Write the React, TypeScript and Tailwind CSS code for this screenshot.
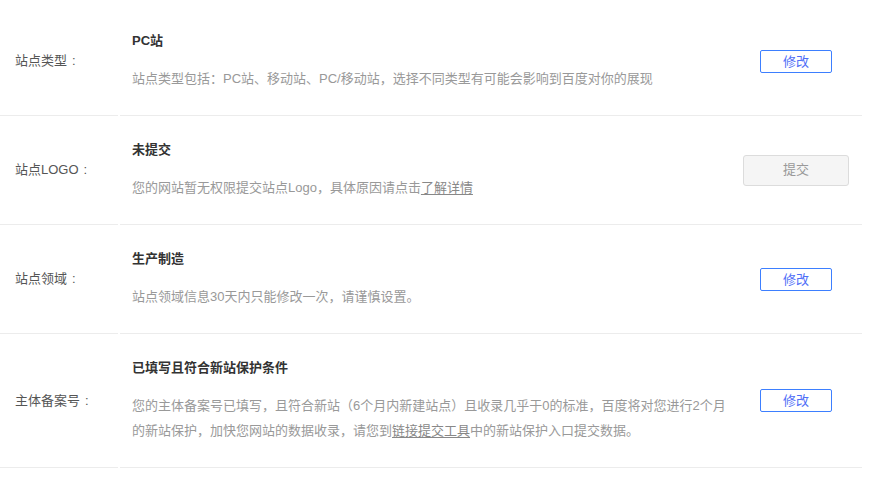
import React from "react";

type Row = {
  label: string;
  title: string;
  desc: React.ReactNode;
  action: "edit" | "submit";
};

const rows: Row[] = [
  {
    label: "站点类型",
    title: "PC站",
    desc: "站点类型包括：PC站、移动站、PC/移动站，选择不同类型有可能会影响到百度对你的展现",
    action: "edit",
  },
  {
    label: "站点LOGO",
    title: "未提交",
    desc: (
      <>
        您的网站暂无权限提交站点Logo，具体原因请点击
        <a className="text-[#888] underline underline-offset-2 cursor-pointer">了解详情</a>
      </>
    ),
    action: "submit",
  },
  {
    label: "站点领域",
    title: "生产制造",
    desc: "站点领域信息30天内只能修改一次，请谨慎设置。",
    action: "edit",
  },
  {
    label: "主体备案号",
    title: "已填写且符合新站保护条件",
    desc: (
      <>
        您的主体备案号已填写，且符合新站（6个月内新建站点）且收录几乎于0的标准，百度将对您进行2个月
        <br />
        的新站保护，加快您网站的数据收录，请您到
        <a className="text-[#888] underline underline-offset-2 cursor-pointer">链接提交工具</a>
        中的新站保护入口提交数据。
      </>
    ),
    action: "edit",
  },
];

function ActionButton({ kind }: { kind: Row["action"] }) {
  if (kind === "submit") {
    return (
      <button className="w-[106px] h-[31px] rounded-[3px] border border-[#dcdcdc] bg-[#f5f5f5] text-[13px] text-[#999]">
        提交
      </button>
    );
  }
  return (
    <button className="w-[72px] h-[23px] rounded-[2px] border border-[#3d7fff] bg-white text-[13px] leading-none text-[#4f6ef7]">
      修改
    </button>
  );
}

export default function App() {
  return (
    <div
      className="w-[878px] h-[500px] bg-white pt-[7px] overflow-hidden"
      style={{ fontFamily: '"Liberation Sans", "Noto Sans CJK SC", sans-serif' }}
    >
      <div className="w-[862px]">
        {rows.map((row) => (
          <div key={row.label} className="flex items-stretch">
            <div className="w-[118px] shrink-0 flex items-center pl-[15px] border-b border-[#ececec] text-[13px] text-[#555]">
              {row.label}
              <span className="ml-[5px]">:</span>
            </div>
            <div className="ml-[2px] flex-1 flex items-center border-b border-[#ececec]">
              <div className="w-[610px] pl-[12px] pt-[24px] pb-[24px]">
                <div className="text-[13px] leading-[20px] font-bold text-[#333]">{row.title}</div>
                <div className="mt-[15px] text-[13px] leading-[25px] text-[#999] whitespace-nowrap">
                  {row.desc}
                </div>
              </div>
              <div className="flex-1 flex justify-center">
                <ActionButton kind={row.action} />
              </div>
            </div>
          </div>
        ))}
      </div>
    </div>
  );
}
